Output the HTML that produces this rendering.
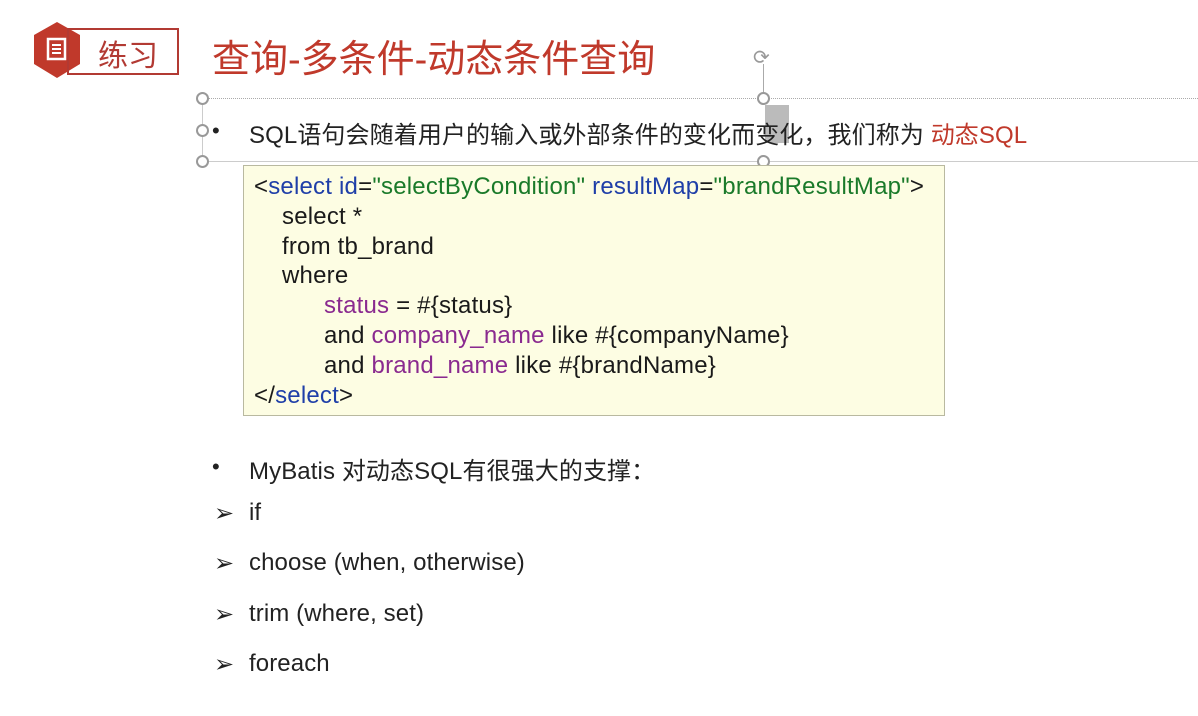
<!DOCTYPE html>
<html><head><meta charset="utf-8"><style>
body{margin:0;width:1198px;height:716px;background:#fff;position:relative;overflow:hidden;font-family:"Liberation Sans","Noto Sans CJK SC",sans-serif;color:#222}
.a{position:absolute;white-space:nowrap}
.h{position:absolute;width:9px;height:9px;border:2px solid #999;border-radius:50%;background:#fff}
.code{position:absolute;left:243px;top:165px;width:700px;height:249px;background:#fdfde3;border:1px solid #b9b9a0;font-size:24px;line-height:29.8px;color:#1a1a1a;letter-spacing:0.2px}
.code div{white-space:nowrap}
.b{color:#1f3fa8}.g{color:#1a7a2a}.p{color:#8a2a8f}
.li{font-size:24px;letter-spacing:0.1px}
.dot{font-size:22px}
</style></head><body>
<svg class="a" style="left:33px;top:21px" width="150" height="60">
<polygon points="24,1 47,14 47,43 24,57 1,43 1,14" fill="#c0392b"/>
<rect x="35" y="8" width="110" height="45" fill="none" stroke="#b23a33" stroke-width="2"/>
<rect x="15" y="18" width="17" height="20" fill="none" stroke="#fff" stroke-width="2.5"/>
<line x1="19" y1="24" x2="28" y2="24" stroke="#fff" stroke-width="2"/><line x1="19" y1="28" x2="28" y2="28" stroke="#fff" stroke-width="2"/><line x1="19" y1="32" x2="28" y2="32" stroke="#fff" stroke-width="2"/>
</svg>
<div class="a" style="left:98px;top:31px;font-size:30px;color:#b23a33">练习</div>
<div class="a" style="left:212px;top:28px;font-size:38px;color:#c0392b">查询-多条件-动态条件查询</div>
<div class="a" style="left:206px;top:98px;width:1000px;border-top:1px dotted #aaa"></div>
<div class="a" style="left:206px;top:161px;width:1000px;border-top:1px solid #ccc"></div>
<div class="a" style="left:202px;top:100px;height:61px;border-left:1px solid #ccc"></div>
<div class="a" style="left:763px;top:64px;height:34px;border-left:1px solid #aaa"></div>
<div class="a" style="left:753px;top:45px;font-size:20px;color:#999">⟳</div>
<div class="a" style="left:765px;top:105px;width:24px;height:38px;background:#bbb"></div>
<div class="h" style="left:196px;top:92px"></div><div class="h" style="left:196px;top:124px"></div><div class="h" style="left:196px;top:155px"></div>
<div class="h" style="left:757px;top:92px"></div><div class="h" style="left:757px;top:155px"></div>
<div class="a dot" style="left:212px;top:118px">•</div>
<div class="a li" style="left:249px;top:115px">SQL语句会随着用户的输入或外部条件的变化而变化，我们称为 <span style="color:#c0392b">动态SQL</span></div>
<div class="code"><div style="padding:6px 0 0 10px">
<div>&lt;<span class="b">select</span> <span class="b">id</span>=<span class="g">"selectByCondition"</span> <span class="b">resultMap</span>=<span class="g">"brandResultMap"</span>&gt;</div>
<div style="padding-left:28px">select *</div>
<div style="padding-left:28px">from tb_brand</div>
<div style="padding-left:28px">where</div>
<div style="padding-left:70px"><span class="p">status</span> = #{status}</div>
<div style="padding-left:70px">and <span class="p">company_name</span> like #{companyName}</div>
<div style="padding-left:70px">and <span class="p">brand_name</span> like #{brandName}</div>
<div>&lt;/<span class="b">select</span>&gt;</div>
</div></div>
<div class="a dot" style="left:212px;top:454px">•</div>
<div class="a li" style="left:249px;top:451px">MyBatis 对动态SQL有很强大的支撑：</div>
<div class="a li" style="left:214px;top:499px">➢</div><div class="a li" style="left:249px;top:499px">if</div>
<div class="a li" style="left:214px;top:549px">➢</div><div class="a li" style="left:249px;top:549px">choose (when, otherwise)</div>
<div class="a li" style="left:214px;top:600px">➢</div><div class="a li" style="left:249px;top:600px">trim (where, set)</div>
<div class="a li" style="left:214px;top:650px">➢</div><div class="a li" style="left:249px;top:650px">foreach</div>
</body></html>
